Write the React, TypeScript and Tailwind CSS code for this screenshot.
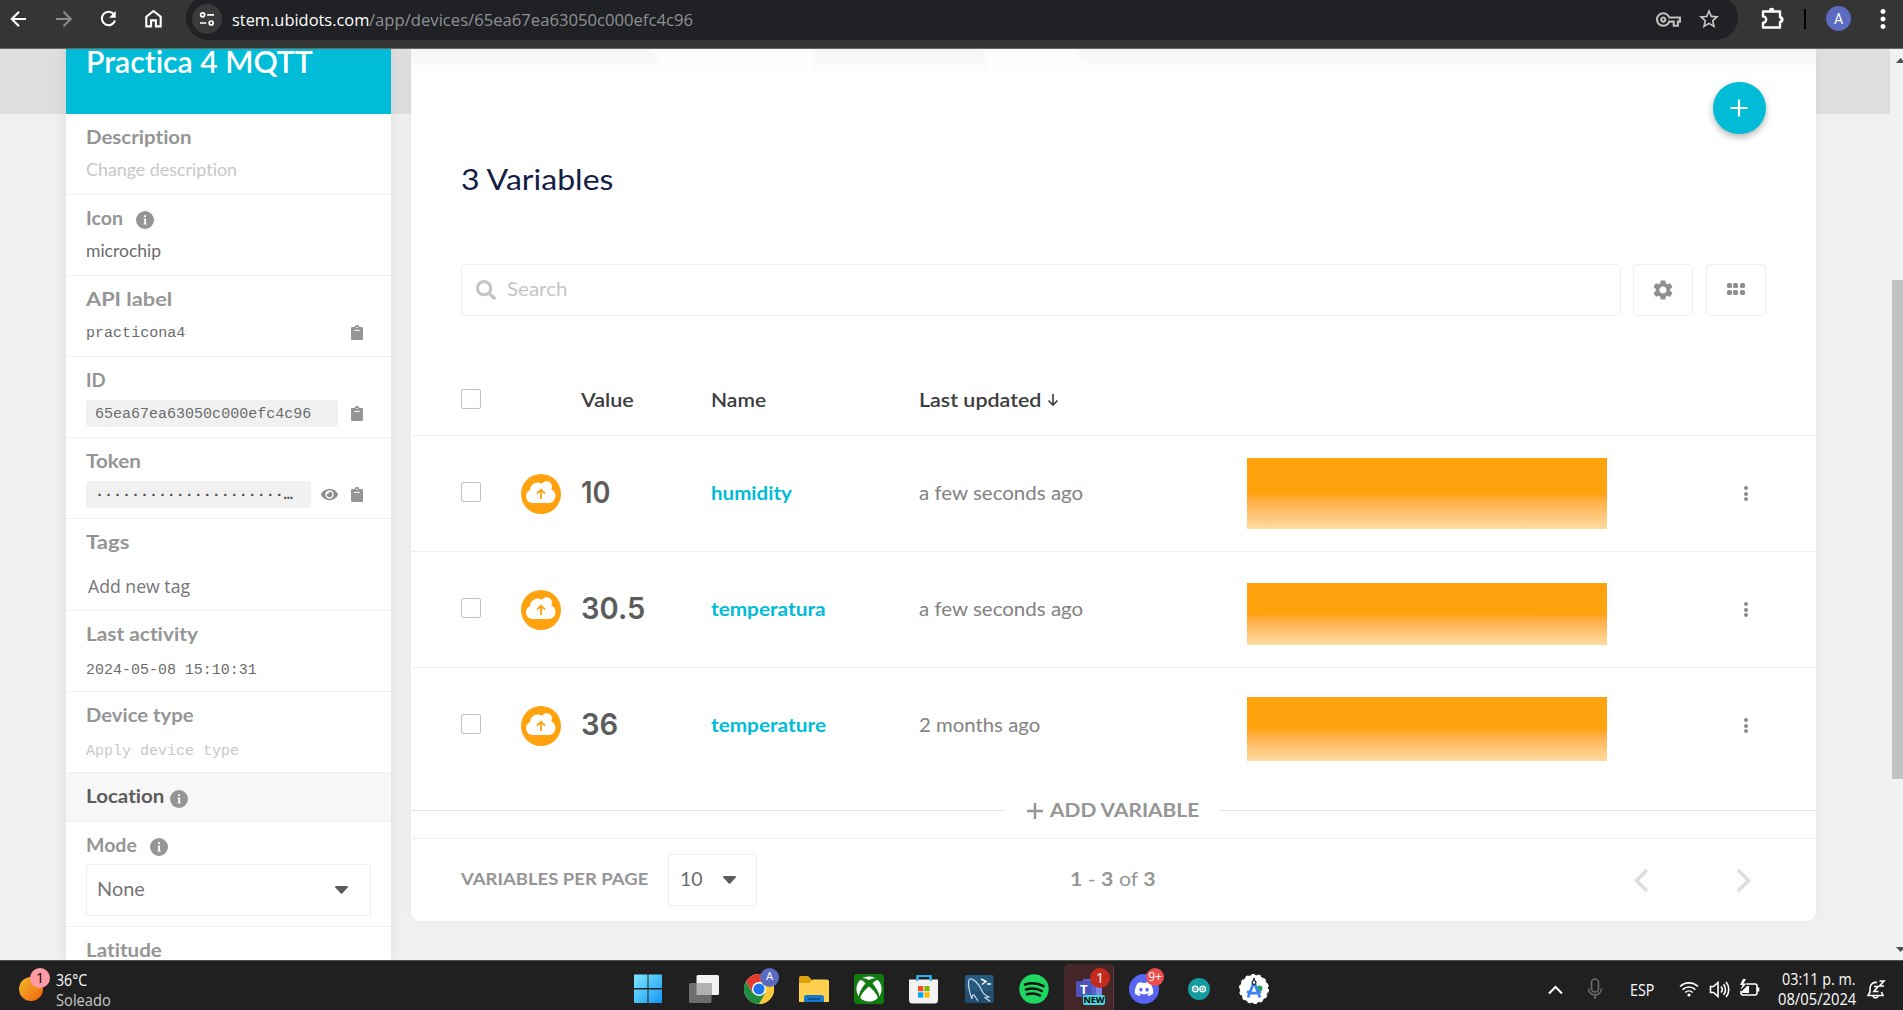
import React, { useLayoutEffect, useRef } from "react";
import { FaXbox, FaDiscord, FaSearch, FaEye } from "react-icons/fa";
import {
  MdOutlineVpnKey,
  MdStarBorder,
  MdSettings,
  MdMoreVert,
} from "react-icons/md";

type TextProps = { w: number; className?: string; children: React.ReactNode };

/* Text stretched horizontally so that it fills a given width. */
function T({ w, className = "", children }: TextProps) {
  const ref = useRef<HTMLSpanElement>(null);
  useLayoutEffect(() => {
    const el = ref.current;
    if (el) el.style.transform = `scaleX(${w / el.offsetWidth})`;
  }, [w]);
  return (
    <span className={`block shrink-0 whitespace-nowrap ${className}`} style={{ width: w }}>
      <span ref={ref} className="inline-block w-max origin-left">{children}</span>
    </span>
  );
}

function Info({ className = "" }: { className?: string }) {
  return (
    <svg viewBox="0 0 18 18" className={`size-[18px] shrink-0 ${className}`}>
      <circle cx="9" cy="9" r="9" fill="#959595" />
      <path d="M8.100 4.200h1.900v1.900H8.100zM7.600 7.500H10v4.900h.7v1.100H7.500v-1.100h.7V8.600h-.6z" fill="#fff" />
    </svg>
  );
}

function Clipboard() {
  return (
    <svg viewBox="0 0 12 15" className="h-[15px] w-3 shrink-0">
      <path
        d="M1.2 2H3.7a2.3 2.1 0 0 1 4.6 0h2.5A1.2 1.2 0 0 1 12 3.200V13.800A1.200 1.200 0 0 1 10.800 15H1.200A1.200 1.200 0 0 1 0 13.800V3.200A1.200 1.200 0 0 1 1.200 2z"
        fill="#959595"
      />
      <circle cx="6" cy="2.400" r=".75" fill="#fff" />
      <path d="M3.200 5.400h5.600" stroke="#fff" strokeWidth="1" />
    </svg>
  );
}

function Caret() {
  return (
    <svg viewBox="0 0 13 8" className="h-2 w-[13px] shrink-0">
      <path d="M1 0h11c.9 0 1.200.9.700 1.500L7.500 7.300a1.400 1.400 0 0 1-2 0L.3 1.500C-.2.900.1 0 1 0z" fill="#5c5c5c" />
    </svg>
  );
}

function BrowserBar() {
  return (
    <header className="flex h-[49px] shrink-0 items-start border-b border-[#6a6666] bg-[#353535] text-white">
      <svg viewBox="0 0 186 40" className="h-10 w-[186px] shrink-0" fill="none" strokeWidth="2.100">
        <path d="M26 19H12M19 11.800 11.800 19l7.200 7.200" stroke="#fff" />
        <path d="M56 19h14M63.500 11.800 70.700 19l-7.200 7.200" stroke="#8b8b8b" />
        <path d="M113.800 14.200A6.700 6.700 0 1 0 115 20.500" stroke="#fff" />
        <path d="M115.700 11v6.700H109z" fill="#fff" />
        <path d="M146.300 26.400V16.800L153.500 11l7.200 5.800v9.600h-4.800v-6h-4.800v6z" stroke="#fff" />
      </svg>
      <div className="-mt-1 flex h-11 w-[1552px] items-center rounded-full bg-[#202124] pt-1 pl-1.5">
        <div className="mb-0.5 flex size-[30px] items-center justify-center rounded-full bg-[#3a3a3c]">
          <svg viewBox="0 0 16 16" className="size-4" fill="none" stroke="#fff" strokeWidth="1.700">
            <circle cx="3.600" cy="3.800" r="2" />
            <path d="M8.200 3.800H15M1 12h6.200" />
            <circle cx="12.200" cy="12" r="2" />
          </svg>
        </div>
        <div className="ml-2.5 flex font-['Open_Sans','Noto_Sans',sans-serif] text-[17px] leading-6">
          <T w={137}>stem.ubidots.com</T>
          <T w={324} className="text-[#8f9195]">/app/devices/65ea67ea63050c000efc4c96</T>
        </div>
        <MdOutlineVpnKey className="mr-4 mb-0.5 ml-auto size-[25px] text-[#c0c0c0]" />
        <MdStarBorder className="mr-[17px] mb-0.5 size-6 text-[#c8c8c8]" />
      </div>
      <svg viewBox="0 0 26 26" className="mt-1.5 ml-[22px] size-[26px] shrink-0" fill="none" stroke="#fff" strokeWidth="2.400" strokeLinejoin="round">
        <path d="M3 5.500h17v5.700a2.400 2.400 0 0 1 0 4.800v5.500H3v-4.700a3.200 3.200 0 0 0 0-6.400z" />
        <path d="M9 4.500a2.700 2.700 0 0 1 5.400 0z" fill="#fff" stroke="none" />
        <path d="M20.500 11a2.700 2.700 0 0 1 0 5.200z" fill="#fff" stroke="none" />
      </svg>
      <div className="mt-[9px] ml-[18px] h-5 w-0.5 bg-black" />
      <div className="mt-1.5 ml-5 flex size-[25px] items-center justify-center rounded-full bg-[#5c6bc0] font-[Roboto,sans-serif] text-sm">A</div>
      <MdMoreVert className="-mr-2 ml-[17px] mt-1 size-[30px] shrink-0" />
    </header>
  );
}

function Label({ w, children, className = "text-[#959595]" }: TextProps) {
  return <T w={w} className={`text-[19.500px] leading-7 font-bold ${className}`}>{children}</T>;
}

function Section({ children, className = "h-[81px]" }: { children: React.ReactNode; className?: string }) {
  return <section className={`shrink-0 border-b border-[#efefef] pt-[9px] pr-5 pl-5 ${className}`}>{children}</section>;
}

const mono = "font-['Liberation_Mono',monospace] text-[15.500px] leading-[33px]";

function Sidebar() {
  return (
    <aside className="ml-[66px] flex w-[325px] shrink-0 flex-col overflow-hidden bg-white shadow-[0_0_14px_rgba(0,20,10,0.08)]">
      <div className="flex h-[65px] shrink-0 items-start bg-[#00bcd7] pl-5 text-white">
        <T w={227} className="-mt-2 text-[30px] leading-[40px] font-semibold">Practica 4 MQTT</T>
      </div>
      <Section>
        <Label w={106}>Description</Label>
        <div className="mt-1.5 h-[27px]">
          <T w={151} className="text-[17.500px] leading-[26px] text-[#c8c8c8]">Change description</T>
        </div>
      </Section>
      <Section>
        <div className="flex h-7 items-center">
          <Label w={37}>Icon</Label>
          <Info className="mt-1 ml-[13px]" />
        </div>
        <div className="mt-1.5 h-[27px]">
          <T w={75} className="text-[17.500px] leading-[26px] text-[#6c6c6c]">microchip</T>
        </div>
      </Section>
      <Section>
        <Label w={86}>API label</Label>
        <div className="mt-1.5 flex h-[27px] items-center justify-between pr-2">
          <T w={99} className={`${mono} pt-0.5 text-[#6c6c6c]`}>practicona4</T>
          <Clipboard />
        </div>
      </Section>
      <Section>
        <Label w={20}>ID</Label>
        <div className="mt-1.5 flex h-[27px] items-center justify-between pr-2">
          <div className="flex h-[27px] w-[252px] items-center rounded bg-[#f1f1f1] pt-0.5 pl-[9px] text-[#6c6c6c]">
            <T w={216} className={mono}>65ea67ea63050c000efc4c96</T>
          </div>
          <Clipboard />
        </div>
      </Section>
      <Section>
        <Label w={55}>Token</Label>
        <div className="mt-1.5 flex h-[27px] items-center pr-2">
          <div className="flex h-[27px] w-[225px] items-center rounded bg-[#f1f1f1] pt-0.5 pl-[9px] text-[#4c4c4c]">
            <T w={198} className={`${mono} font-bold`}>·····················…</T>
          </div>
          <FaEye className="ml-2.5 size-[17px] text-[#8b8b8b]" />
          <span className="ml-auto"><Clipboard /></span>
        </div>
      </Section>
      <Section className="h-[92px]">
        <Label w={43}>Tags</Label>
        <div className="mt-[5px] pl-0.5">
          <T w={102} className="font-['Open_Sans','Noto_Sans',sans-serif] text-[18px] leading-[50px] text-[#757575]">Add new tag</T>
        </div>
      </Section>
      <Section>
        <Label w={112}>Last activity</Label>
        <div className="mt-1.5 h-[27px]"><T w={171} className={`${mono} text-[#6c6c6c]`}>2024-05-08 15:10:31</T></div>
      </Section>
      <Section>
        <Label w={108}>Device type</Label>
        <div className="mt-1.5 h-[27px]"><T w={153} className={`${mono} text-[#c8c8c8]`}>Apply device type</T></div>
      </Section>
      <Section className="flex h-[49px] bg-[#f7f7f7]">
        <Label w={78} className="text-[#5c5c5c]">Location</Label>
        <Info className="mt-2 ml-1.5" />
      </Section>
      <Section className="h-[105px]">
        <div className="flex h-7 items-center">
          <Label w={51}>Mode</Label>
          <Info className="mt-1 ml-[13px]" />
        </div>
        <div className="mt-[5px] flex h-[52px] w-[285px] items-center justify-between border border-[#efefef] pr-[22px] pl-2.5">
          <T w={48} className="pb-0.5 text-[19.500px] text-[#757575]">None</T>
          <Caret />
        </div>
      </Section>
      <div className="pt-[9px] pl-5"><Label w={76}>Latitude</Label></div>
    </aside>
  );
}

const rows = [
  { value: "10", vw: 29, name: "humidity", nw: 81, ago: "a few seconds ago", aw: 164, chart: "h-[71.500px]" },
  { value: "30.5", vw: 64, name: "temperatura", nw: 115, ago: "a few seconds ago", aw: 164, chart: "h-[62.500px]" },
  { value: "36", vw: 37, name: "temperature", nw: 115, ago: "2 months ago", aw: 121, chart: "h-[64.500px]" },
];

const grid = "grid grid-cols-[60px_60px_130px_208px_328px_360px_1fr] pl-[50px]";

function Checkbox() {
  return <div className="size-5 rounded-[2px] border border-[#c2c2c2] bg-white" />;
}

function CloudBadge() {
  return (
    <svg viewBox="0 0 40 40" className="size-10">
      <circle cx="20" cy="20" r="20" fill="#ffa20e" />
      <path d="M11.500 29A6.700 6.700 0 0 1 9 16.200 7.700 7.700 0 0 1 21 9.800a5.200 5.200 0 0 1 9.300 5.600A7.200 7.200 0 0 1 28.500 29z" fill="#fff" />
      <path d="M20 25v-8.500M16 19.700l4-4 4 4" stroke="#ffa20e" strokeWidth="1.800" fill="none" />
    </svg>
  );
}

function Main() {
  return (
    <main className="ml-5 flex h-[872px] w-[1405px] shrink-0 flex-col rounded-b-[9px] bg-white shadow-[0_0_12px_rgba(0,0,0,0.03)]">
      <div className="-mb-[28px] flex h-[28px] shrink-0 justify-start bg-linear-to-b from-[#f5f5f5] to-white">
        <svg viewBox="0 0 1405 28" className="h-7 w-[1405px]" fill="#fff" fillOpacity=".7">
          <path d="M240 0h164q1 15-6 28H257z" />
          <path d="M572 0h95l7 28h-96z" />
        </svg>
      </div>
      <div className="flex shrink-0 justify-end pt-[33px] pr-[50px]">
        <button className="flex h-[52px] w-[53px] items-center justify-center rounded-full bg-[#00bcd7] pr-px pb-px shadow-[0_3px_7px_rgba(0,0,0,0.3)]">
          <svg viewBox="0 0 18 18" className="size-[18px]" stroke="#fff" strokeWidth="2.200"><path d="M9 .5v17M.5 9h17" /></svg>
        </button>
      </div>
      <h1 className="mt-[25px] pl-[50px]">
        <T w={152} className="text-[29.500px] leading-10 text-[#122044]">3 Variables</T>
      </h1>
      <div className="mt-[65px] flex h-[52px] shrink-0 pl-[50px]">
        <div className="flex w-[1160px] items-center rounded border border-[#efefef] pb-px pl-3.5">
          <FaSearch className="size-5 text-[#c4c4c4]" />
          <T w={60} className="ml-[11px] pb-0.5 text-[19.500px] text-[#c4c4c4]">Search</T>
        </div>
        <div className="ml-3 flex w-[60px] items-center justify-center rounded border border-[#efefef] pb-px">
          <MdSettings className="size-6 text-[#8f8f8f]" />
        </div>
        <div className="ml-[13px] flex w-[60px] items-center justify-center rounded border border-[#efefef] pr-px pb-[3px]">
          <div className="grid grid-cols-3 gap-x-[1.500px] gap-y-[2px]">
            {[0, 1, 2, 3, 4, 5].map((i) => <span key={i} className="size-[5px] rounded-[1.500px] bg-[#8f8f8f]" />)}
          </div>
        </div>
      </div>
      <div className={`mt-12 h-[72px] shrink-0 items-center border-b border-[#efefef] text-[19.500px] font-semibold text-[#3c3c3c] ${grid}`}>
        <div className="pb-0.5"><Checkbox /></div>
        <span />
        <T w={53}>Value</T>
        <T w={55}>Name</T>
        <div className="flex items-center">
          <T w={122}>Last updated</T>
          <svg viewBox="0 0 12 14" className="ml-[6px] h-3.5 w-3" fill="none" stroke="#3c3c3c" strokeWidth="1.600">
            <path d="M6 1v11M1.500 7.500 6 12l4.500-4.500" />
          </svg>
        </div>
      </div>
      {rows.map((r, i) => (
        <div key={r.name} className={`shrink-0 items-center ${i < 2 ? "h-[116px] border-b border-[#efefef]" : "h-[115px]"} ${grid}`}>
          <div className="pb-[3px]"><Checkbox /></div>
          <CloudBadge />
          <T w={r.vw} className="mb-[3px] font-[Inter,sans-serif] text-[30px] leading-10 font-semibold text-[#5c5c5c]">{r.value}</T>
          <T w={r.nw} className="pb-0.5 text-[19.500px] font-bold text-[#00bcd7]">{r.name}</T>
          <T w={r.aw} className="pb-0.5 text-[19.500px] text-[#828282]">{r.ago}</T>
          <div className="flex h-full items-end pb-[22px]">
            <div className={`w-full bg-linear-to-b from-[#ffa20e] from-50% to-[#ffdba0] ${r.chart}`} />
          </div>
          <div className="ml-[137px] flex flex-col gap-[1.700px]">
            {[0, 1, 2].map((d) => <span key={d} className="size-1 rounded-full bg-[#8b8b8b]" />)}
          </div>
        </div>
      ))}
      <div className="flex h-14 shrink-0 items-center border-b border-[#efefef] text-[#959595]">
        <div className="h-px w-[595px] bg-[#e6e6e6]" />
        <svg viewBox="0 0 16 16" className="ml-[21px] size-4" stroke="#959595" strokeWidth="2.400"><path d="M8 0v16M0 8h16" /></svg>
        <T w={149} className="ml-[7px] pb-0.5 text-[19.500px] font-bold">ADD VARIABLE</T>
        <div className="ml-[21px] h-px grow bg-[#e6e6e6]" />
      </div>
      <div className="flex h-[82px] items-center pl-[50px] text-[#959595]">
        <T w={187} className="pb-0.5 text-[17.500px] font-bold">VARIABLES PER PAGE</T>
        <div className="ml-5 flex h-[52px] w-[89px] items-center border border-[#efefef] pl-[11px]">
          <T w={23} className="pb-0.5 text-[19.500px] text-[#6c6c6c]">10</T>
          <span className="ml-5"><Caret /></span>
        </div>
        <T w={85} className="ml-[313px] pb-0.5 text-[19.500px]"><b>1</b> - <b>3</b> of <b>3</b></T>
        <svg viewBox="0 0 117 24" className="ml-[479px] h-6 w-[117px]" fill="none" stroke="#dedede" strokeWidth="3.600" strokeLinecap="round" strokeLinejoin="round">
          <path d="M12 3 2.500 12.500 12 22M105 3l9.500 9.500L105 22" />
        </svg>
      </div>
    </main>
  );
}

function Scrollbar() {
  return (
    <div className="ml-auto flex w-[13px] flex-col items-end overflow-hidden bg-[#f1f1f1]">
      <svg viewBox="0 0 7 6" className="mt-[9px] h-1.5 w-[7px]"><path d="M0 5 4.500 0 9 5z" fill="#505050" /></svg>
      <div className="mt-[216px] h-[499px] w-[11px] bg-[#c1c1c1]" />
      <svg viewBox="0 0 7 6" className="mt-[168px] h-1.5 w-[7px]"><path d="M0 0 4.500 5 9 0z" fill="#505050" /></svg>
    </div>
  );
}

function Badge({ children, className }: { children: React.ReactNode; className: string }) {
  return <span className={`absolute flex items-center justify-center rounded-full ${className}`}>{children}</span>;
}

function TaskIcons() {
  return (
    <div className="ml-[511px] flex h-[49px] items-center pt-[7px]">
      <svg viewBox="0 0 30 30" className="mr-[26px] size-[30px]">
        <defs><linearGradient id="win" x1="0" y1="0" x2="1" y2="1" gradientUnits="objectBoundingBox"><stop stopColor="#7ee9ff" /><stop offset="1" stopColor="#1596f5" /></linearGradient></defs>
        <path d="M1 .5h13.500V14H1zM15.500.5H29V14H15.500zM1 15.500h13.500V29H1zM15.500 15.500H29V29H15.500z" fill="url(#win)" />
      </svg>
      <svg viewBox="0 0 30 30" className="mr-[25px] size-[30px]">
        <rect x="7.500" y="1" width="22.500" height="20" rx="1.500" fill="#f3f3f3" />
        <rect x="0" y="9" width="22.500" height="20" rx="1.500" fill="#6d6d6d" />
        <path d="M7.500 9h15v12h-15z" fill="#b1b1b1" />
      </svg>
      <div className="relative mr-[25px] size-[30px]">
        <svg viewBox="0 0 30 30" className="size-[30px]">
          <circle cx="15" cy="15" r="15" fill="#fff" />
          <path d="M15 15 2 7.500A15 15 0 0 1 28 7.500z" fill="#e33b2e" />
          <path d="M15 7.500h13A15 15 0 0 1 15 30l6.500-11.300z" fill="#fcc934" />
          <path d="M2 7.500A15 15 0 0 0 15 30l6.500-11.300h-13z" fill="#1e8e3e" />
          <path d="M2 7.500 8.600 18.800 15 15V7.500z" fill="#e33b2e" />
          <circle cx="15" cy="15" r="7" fill="#fff" /><circle cx="15" cy="15" r="5.600" fill="#1a73e8" />
        </svg>
        <Badge className="-top-1.5 left-4 size-[19px] bg-[#5c6bc0] font-[Roboto,sans-serif] text-[11px] text-white">A</Badge>
      </div>
      <svg viewBox="0 0 30 30" className="mr-[25px] size-[30px]">
        <path d="M0 4a2 2 0 0 1 2-2h7l4 4h15v10H0z" fill="#e0a10b" />
        <path d="M0 9h10l4-3.500h14a2 2 0 0 1 2 2V28H0z" fill="#ffd04e" />
        <path d="M5 28v-4.500a2.500 2.500 0 0 1 2.500-2.500h15a2.500 2.500 0 0 1 2.500 2.500V28z" fill="#1679ca" />
        <path d="M9 25h12" stroke="#0a4a80" strokeWidth="1.400" />
      </svg>
      <div className="mr-[25px] flex size-[30px] items-center justify-center rounded-[3px] bg-[#107c10]"><FaXbox className="size-[26px] text-white" /></div>
      <svg viewBox="0 0 30 30" className="mr-[25px] size-[30px]">
        <path d="M8.500 8V2h13v6" fill="none" stroke="#27b1ec" strokeWidth="2.200" />
        <path d="M0 5.500h29V26a3.500 3.500 0 0 1-3.500 3.500h-22A3.500 3.500 0 0 1 0 26z" fill="#f2f2f2" />
        <path d="M8.500 2v5M21.500 2v5" stroke="#27b1ec" strokeWidth="2.200" />
        <path d="M9 12h5.300v5.300H9z" fill="#f25022" /><path d="M15.300 12h5.300v5.300h-5.300z" fill="#7fba00" />
        <path d="M9 18.300h5.300v5.300H9z" fill="#00a4ef" /><path d="M15.300 18.300h5.300v5.300h-5.300z" fill="#ffb900" />
      </svg>
      <svg viewBox="0 0 30 30" className="mr-[25px] size-[30px]">
        <rect x="1" y="1" width="28.500" height="28" rx="2" fill="#28597f" />
        <path d="M1 17h28.500v12H1z" fill="#1c4668" opacity=".6" />
        <path d="M8 25C5 18 3 6 6 5s9 5 11 10c2 5 4 6 8 8l-4 .5 5 4M8 25c0-3 1-5 2-4l4 6" fill="none" stroke="#c9dbe8" strokeWidth="1.200" />
        <path d="M17 5l5 2.500-4 3M23 10h4" fill="none" stroke="#fff" strokeWidth="1.500" />
      </svg>
      <svg viewBox="0 0 30 30" className="mr-[15px] size-[30px]">
        <circle cx="15" cy="15" r="14.700" fill="#1ed760" />
        <path d="M6 10.500q10-3 18.500 1.600M7 15.500q8.500-2.500 15.800 1.500M8 20.200q7-2 13 1.300" fill="none" stroke="#111" strokeWidth="2.500" strokeLinecap="round" />
      </svg>
      <div className="relative mr-[15px] h-[46px] w-[50px] shrink-0 self-end rounded-t-[5px] border-r border-[#5b3a3c] bg-[#45272a]">
        <svg viewBox="0 0 50 45" className="h-[45px] w-[50px]">
          <path d="M26 19h12v11a8 8 0 0 1-12 5z" fill="#7b83eb" />
          <path d="M19 15h13v22H19z" fill="#5b62c9" />
          <rect x="12" y="17" width="16" height="16" rx="1.500" fill="#4b53bc" />
        </svg>
        <span className="absolute top-[16px] left-4 font-['Open_Sans',sans-serif] text-[13px] leading-[18px] font-bold text-white">T</span>
        <Badge className="top-1 left-[26px] size-5 bg-[#c42b1c] font-['Open_Sans',sans-serif] text-sm text-white">1</Badge>
        <span className="absolute top-[31px] left-[19px] flex h-[10px] w-[22px] items-center justify-center rounded-[2px] bg-[#3fd8dd] font-['Open_Sans',sans-serif] text-[9px] font-bold text-black">NEW</span>
      </div>
      <div className="relative mr-[29px] flex size-[30px] items-center justify-center rounded-full bg-[#5865f2]">
        <FaDiscord className="size-5 text-white" />
        <Badge className="-top-[6px] left-[17px] size-[18px] bg-[#ed4c4c] font-['Open_Sans',sans-serif] text-[12px] text-white">9+</Badge>
      </div>
      <svg viewBox="0 0 22 22" className="mr-11 size-[22px]">
        <circle cx="11" cy="11" r="11" fill="#149ca1" />
        <circle cx="7.300" cy="11" r="2.800" fill="none" stroke="#fff" strokeWidth="1.400" /><circle cx="14.700" cy="11" r="2.800" fill="none" stroke="#fff" strokeWidth="1.400" />
        <path d="M6 11h2.600M13.400 11H16M14.700 9.700v2.600" stroke="#fff" strokeWidth=".9" />
      </svg>
      <svg viewBox="0 0 30 30" className="-ml-[15px] size-[30px]">
        <circle cx="15" cy="15" r="14" fill="#fff" /><circle cx="15" cy="15" r="14" fill="none" stroke="#fff" strokeWidth="2" strokeDasharray="3.300 3" />
        <circle cx="20.500" cy="14.500" r="3" fill="#2aa05a" />
        <path d="M15 8 9 23.500M15 8l6 15.500M8 17.500q7 3.500 14 0" fill="none" stroke="#3f86f4" strokeWidth="2.800" />
        <circle cx="15" cy="8.500" r="1.900" fill="#fff" stroke="#23323d" strokeWidth="1.300" /><path d="M15 4v3" stroke="#23323d" strokeWidth="1.800" />
      </svg>
    </div>
  );
}

function Tray() {
  return (
    <div className="ml-auto flex h-[49px] items-center pt-[7px] text-white">
      <svg viewBox="0 0 60 24" className="mr-[25px] h-6 w-[60px]" fill="none" strokeWidth="2">
        <path d="M4 16.500l6.500-6.500 6.500 6.500" stroke="#fff" />
        <g stroke="#6d6d6d" strokeWidth="1.600"><rect x="46.500" y="2" width="7" height="13" rx="3.500" /><path d="M43.500 11.500a6.500 6.500 0 0 0 13 0M50 18v4" /></g>
      </svg>
      <T w={24} className="mt-0.5 text-[16px]">ESP</T>
      <svg viewBox="0 0 84 22" className="ml-[25px] h-[22px] w-[84px]" fill="none" stroke="#fff" strokeWidth="1.600">
        <path d="M1 8.500a13 13 0 0 1 18 0M3.600 11.600a9.300 9.300 0 0 1 12.800 0M6.300 14.500a5.400 5.400 0 0 1 7.400 0" />
        <circle cx="10" cy="17" r="1.600" fill="#fff" stroke="none" />
        <path d="M31.500 8.500h3l4.500-4v14l-4.500-4h-3zM42 8.500a4.500 4.500 0 0 1 0 6M44.500 6.300a8 8 0 0 1 0 10.500M47 4a11.500 11.500 0 0 1 0 15" />
        <path d="M67.500 6H76a2 2 0 0 1 2 2v7a2 2 0 0 1-2 2H64a2 2 0 0 1-2-2v-2M79.500 9.500v4" />
        <path d="M68 8h2v7h-7v-2z" fill="#fff" stroke="none" /><path d="m64 1-3 6h2.500l-2 5 6-6.500h-3L67 1z" fill="#fff" stroke="none" />
      </svg>
      <div className="ml-[13px] flex w-[80px] flex-col items-end text-[15.500px] leading-5">
        <T w={74}>03:11 p. m.</T>
        <T w={78}>08/05/2024</T>
      </div>
      <svg viewBox="0 0 20 22" className="mr-[17px] ml-2.5 h-[22px] w-5" fill="none" stroke="#fff" strokeWidth="1.600">
        <path d="M11 4.500A5.700 5.700 0 0 0 4 10v4l-2 3.500h15L15.500 14M7 18a2.600 2.600 0 0 0 5 0M8 8.500h4L8 13.500h4.500M13.500 3H18l-4.500 5H18" />
      </svg>
    </div>
  );
}

function Taskbar() {
  return (
    <footer className="flex h-[50px] shrink-0 border-t border-[#4e524e] bg-[#202020] font-['Open_Sans','Noto_Sans',sans-serif]">
      <div className="flex w-[122px] text-white">
        <div className="relative mt-4 ml-[19px] size-6 rounded-full bg-linear-to-br from-[#f2b92c] to-[#ef5f0c]">
          <Badge className="-top-[9px] left-[11px] size-5 bg-[#ff9ba5] text-sm text-black">1</Badge>
        </div>
        <div className="mt-[9px] ml-[13px] flex flex-col text-[15.500px] leading-5">
          <T w={31}>36°C</T>
          <T w={55} className="text-[#c8c8c8]">Soleado</T>
        </div>
      </div>
      <TaskIcons />
      <Tray />
    </footer>
  );
}

export default function App() {
  return (
    <div className="flex h-[1010px] w-[1903px] flex-col overflow-hidden font-[Lato,sans-serif] [font-variant-ligatures:none]">
      <BrowserBar />
      <div className="flex h-[911px] shrink-0 overflow-hidden bg-linear-to-b from-[#dedede] from-[65px] to-[#f0f0f0] to-[65px]">
        <Sidebar />
        <Main />
        <Scrollbar />
      </div>
      <Taskbar />
    </div>
  );
}
